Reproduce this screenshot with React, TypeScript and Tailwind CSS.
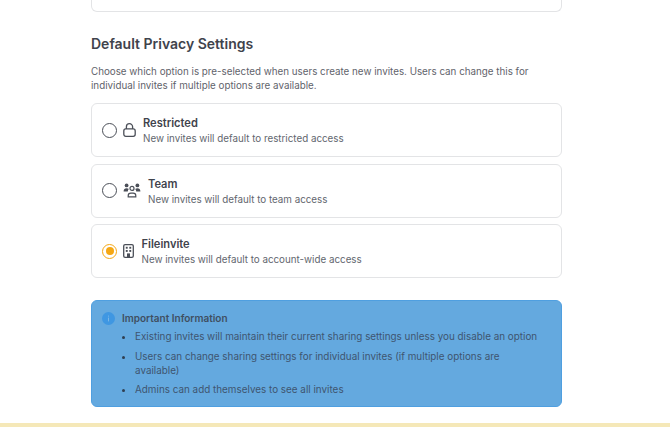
import React from 'react';

type Option = {
  title: string;
  text: string;
  selected?: boolean;
  iconBox: string;
  icon: React.ReactNode;
};

const LockIcon = () => (
  <svg width="13" height="14" viewBox="0 0 13 14" fill="none" stroke="#4b4f58" strokeWidth="1.3">
    <rect x="0.8" y="5.9" width="11.4" height="7.4" rx="2" />
    <path d="M3.4 5.9V3.8a3.1 3.1 0 0 1 6.2 0v2.1" />
  </svg>
);

const TeamIcon = () => (
  <svg width="18" height="15" viewBox="0 0 18 15" fill="#4b4f58">
    <circle cx="3.6" cy="2.4" r="1.9" />
    <circle cx="14.4" cy="2.4" r="1.9" />
    <path d="M0.6 8.4c0-2 1.2-3.2 3-3.2 1 0 1.7 0.3 2.2 0.8-0.6 0.6-1 1.4-1 2.4H0.6z" />
    <path d="M17.4 8.4c0-2-1.2-3.2-3-3.2-1 0-1.7 0.3-2.2 0.8 0.6 0.6 1 1.4 1 2.4h4.2z" />
    <circle cx="9" cy="5.4" r="2" fill="none" stroke="#4b4f58" strokeWidth="1.2" />
    <path d="M5.2 13.8v-1c0-1.6 1.2-2.6 2.6-2.6h2.4c1.4 0 2.6 1 2.6 2.6v1z" fill="none" stroke="#4b4f58" strokeWidth="1.2" />
  </svg>
);

const BuildingIcon = () => (
  <svg width="11" height="14" viewBox="0 0 11 14" fill="none">
    <rect x="0.7" y="0.7" width="9.6" height="12.6" rx="1.4" stroke="#4b4f58" strokeWidth="1.3" />
    <rect x="2.8" y="2.8" width="1.9" height="1.9" fill="#4b4f58" />
    <rect x="6.3" y="2.8" width="1.9" height="1.9" fill="#4b4f58" />
    <rect x="2.8" y="6" width="1.9" height="1.9" fill="#4b4f58" />
    <rect x="6.3" y="6" width="1.9" height="1.9" fill="#4b4f58" />
    <rect x="4" y="9.4" width="3" height="4.2" fill="#4b4f58" />
  </svg>
);

const options: Option[] = [
  { title: 'Restricted', text: 'New invites will default to restricted access', iconBox: 'mr-[7px] w-[13px]', icon: <LockIcon /> },
  { title: 'Team', text: 'New invites will default to team access', iconBox: 'mr-[7px] w-[18px]', icon: <TeamIcon /> },
  { title: 'Fileinvite', text: 'New invites will default to account-wide access', selected: true, iconBox: 'mr-[7.5px] w-[11px]', icon: <BuildingIcon /> },
];

function Radio({ selected }: { selected?: boolean }) {
  return (
    <span className={`flex h-[15px] w-[15px] shrink-0 items-center justify-center rounded-full border-[1.5px] ${selected ? 'border-[#f5a714]' : 'border-[#4b4f58]'}`}>
      {selected && <span className="h-[8px] w-[8px] rounded-full bg-[#f5a714]" />}
    </span>
  );
}

export default function App() {
  return (
    <div className="flex h-[427px] w-[670px] flex-col overflow-hidden bg-white font-['Inter',sans-serif]">
      <div className="ml-[91px] flex w-[471px] flex-1 flex-col">
        {/* end of the card above */}
        <div className="h-[12px] rounded-b-md border border-t-0 border-[#e3e4e6]" />

        <h2 className="mt-[23px] text-[14px] leading-[18px] font-semibold text-[#3f434c]">Default Privacy Settings</h2>
        <p className="mt-[12px] text-[9.8px] leading-[13.5px] text-[#5f636b]">
          Choose which option is pre-selected when users create new invites. Users can change this for individual invites if multiple options are available.
        </p>

        <div className="mt-[11px] flex flex-col gap-[6.5px]">
          {options.map((o) => (
            <div key={o.title} className="flex h-[54px] items-center rounded-md border border-[#e3e4e6] pl-[10px]">
              <Radio selected={o.selected} />
              <span className={`ml-[6px] flex justify-center ${o.iconBox}`}>{o.icon}</span>
              <div className="pt-[2px]">
                <div className="text-[11.1px] leading-[15px] font-semibold text-[#3f434c]">{o.title}</div>
                <div className="text-[9.8px] leading-[15px] text-[#62666e]">{o.text}</div>
              </div>
            </div>
          ))}
        </div>

        <div className="mt-[22px] h-[107px] rounded-md border border-[#4f9fe0] bg-[#64a9df] pt-[10px] pl-[10px]">
          <div className="flex items-center">
            <svg width="13" height="13" viewBox="0 0 13 13" className="shrink-0">
              <circle cx="6.5" cy="6.5" r="6.5" fill="#3f97e2" />
              <rect x="6" y="5.6" width="1" height="3.8" fill="#7ab6e6" />
              <rect x="6" y="3.6" width="1" height="1" fill="#7ab6e6" />
            </svg>
            <span className="ml-[7px] text-[10px] leading-[14px] font-semibold text-[#3f4f62]">Important Information</span>
          </div>
          <ul className="mt-[4px] ml-[33px] list-disc pr-[19px] text-[9.9px] leading-[14px] text-[#3f5570] marker:text-[#2f3f52]">
            <li>Existing invites will maintain their current sharing settings unless you disable an option</li>
            <li className="mt-[6px]">Users can change sharing settings for individual invites (if multiple options are available)</li>
            <li className="mt-[5px]">Admins can add themselves to see all invites</li>
          </ul>
        </div>
      </div>
      <div className="h-[4px] shrink-0 bg-[#f5e8b8]" />
    </div>
  );
}
